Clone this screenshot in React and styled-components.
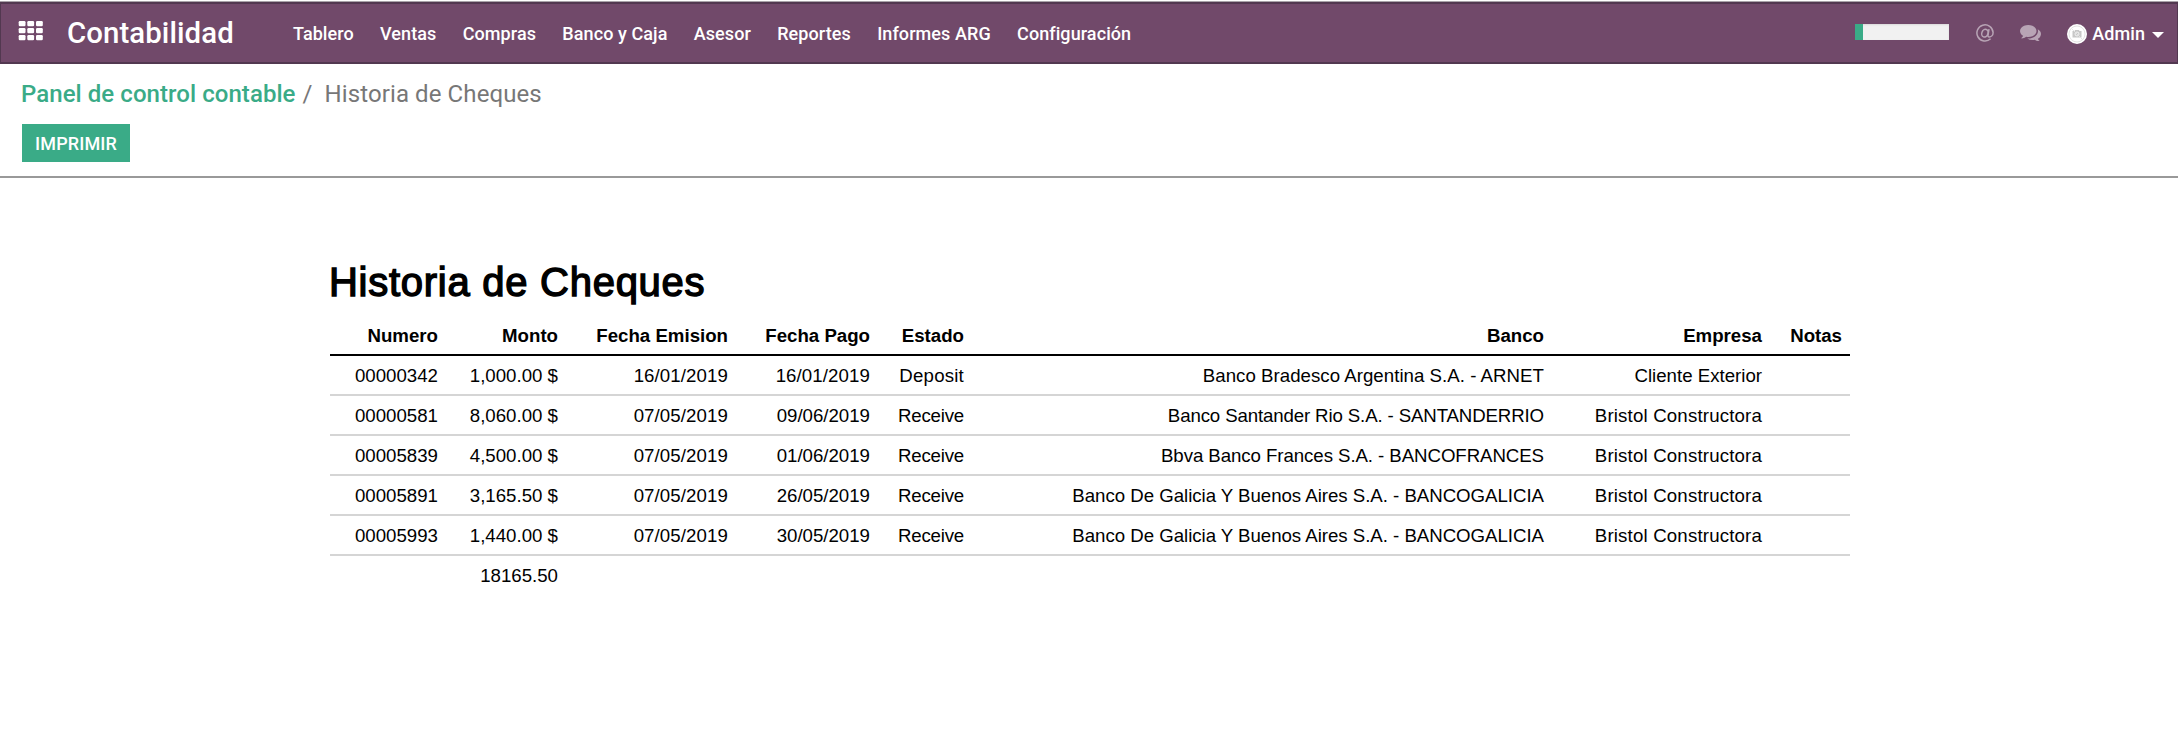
import React from "react";
import styled, { createGlobalStyle } from "styled-components";

const Global = createGlobalStyle`
  * { box-sizing: border-box; }
  body { margin: 0; background: #fff; font-family: Roboto, sans-serif; }
`;

const Page = styled.div`
  height: 730px;
  padding-top: 1px;
  overflow: hidden;
`;

const TopEdge = styled.div`
  height: 1px;
  background: #a9a3a9;
`;

const Navbar = styled.nav`
  display: flex;
  align-items: center;
  height: 62px;
  padding: 0 13px 0 17px;
  background: #71496a;
  border: solid #523850;
  border-width: 2px 1px;
  color: #fff;
  font-size: 18px;
  font-weight: 500;
  letter-spacing: 0.08px;
`;

const AppsGrid = styled.svg`
  width: 25px;
  height: 20px;
  margin-top: -4px;
  flex: none;
`;

const Brand = styled.div`
  flex: none;
  width: 250px;
  padding-left: 24px;
  font-size: 29.4px;
  line-height: 34px;
  white-space: nowrap;
`;

const Menu = styled.div`
  display: flex;
  gap: 26.3px;
  flex: 1;
  padding-top: 1px;
  white-space: nowrap;
`;

const MenuItem = styled.a`
  color: inherit;
`;

const Progress = styled.div`
  width: 94px;
  height: 16px;
  background: #f1f1f1;
  margin: -2px 27px 0 0;
  box-shadow: inset 0 1px 2px rgba(0, 0, 0, 0.1);
`;

const ProgressFill = styled.div`
  width: 8px;
  height: 16px;
  background: #3aab87;
`;

const TrayIcon = styled.svg`
  flex: none;
  width: ${(p) => p.$w}px;
  height: ${(p) => p.$h}px;
  color: #b8a4b5;
  margin-right: 26px;
`;

const Avatar = styled.svg`
  width: 20px;
  height: 20px;
  margin: 2px 5px 0 0;
`;

const UserName = styled.span`
  padding-top: 1px;
`;

const Caret = styled.span`
  margin-left: 7px;
  margin-top: 4px;
  border: 6px solid transparent;
  border-top-color: #fff;
  border-bottom: 0;
`;

const ControlPanel = styled.header`
  height: 114px;
  border-bottom: 2px solid #999;
  padding: 14px 22px 0;
`;

const Breadcrumb = styled.div`
  display: flex;
  height: 32px;
  align-items: center;
  margin-left: -1px;
  font-size: 24px;
  letter-spacing: 0.1px;
  color: #777;
  white-space: pre;
`;

const CrumbLink = styled.a`
  color: #3aab87;
  font-weight: 500;
  letter-spacing: 0.06px;
`;

const CrumbSeparator = styled.span`
  margin: 0 12px 0 7px;
`;

const PrintButton = styled.button`
  display: block;
  width: 108px;
  height: 38px;
  margin-top: 14px;
  padding: 0;
  border: 0;
  background: #3aab87;
  color: #fff;
  font: 500 18px Roboto, sans-serif;
  letter-spacing: 0.12px;
`;

const Report = styled.main`
  width: 1520px;
  margin: 82px 0 0 330px;
  font-family: "Liberation Sans", Arial, sans-serif;
  color: #000;
`;

const Title = styled.h2`
  margin: 0 0 11px -1px;
  font-size: 40px;
  line-height: 44px;
  font-weight: 400;
  letter-spacing: 0.73px;
  -webkit-text-stroke: 1.4px #000;
`;

const Table = styled.table`
  width: 1520px;
  table-layout: fixed;
  border-collapse: separate;
  border-spacing: 0;
  font-size: 18.66px;
  text-align: right;
  white-space: nowrap;
`;

const Col = styled.col`
  width: ${(p) => p.$w}px;
`;

const HeadCell = styled.th`
  height: 41px;
  padding: 2px 8px 0 0;
  text-align: right;
  border-bottom: 2px solid #000;
`;

const Cell = styled.td`
  height: 40px;
  padding: 2px 8px 0 0;
  letter-spacing: ${(p) => p.$tracking || 0}px;
  border-bottom: 2px solid ${(p) => (p.$last ? "transparent" : "#d5d5d5")};
`;

const menu = ["Tablero", "Ventas", "Compras", "Banco y Caja", "Asesor", "Reportes", "Informes ARG", "Configuración"];
const columns = [
  ["Numero", 116],
  ["Monto", 120],
  ["Fecha Emision", 170],
  ["Fecha Pago", 142],
  ["Estado", 94],
  ["Banco", 580],
  ["Empresa", 218],
  ["Notas", 80],
];
const rows = [
  ["00000342", "1,000.00 $", "16/01/2019", "16/01/2019", "Deposit", "Banco Bradesco Argentina S.A. - ARNET", "Cliente Exterior", ""],
  ["00000581", "8,060.00 $", "07/05/2019", "09/06/2019", "Receive", "Banco Santander Rio S.A. - SANTANDERRIO", "Bristol Constructora", ""],
  ["00005839", "4,500.00 $", "07/05/2019", "01/06/2019", "Receive", "Bbva Banco Frances S.A. - BANCOFRANCES", "Bristol Constructora", ""],
  ["00005891", "3,165.50 $", "07/05/2019", "26/05/2019", "Receive", "Banco De Galicia Y Buenos Aires S.A. - BANCOGALICIA", "Bristol Constructora", ""],
  ["00005993", "1,440.00 $", "07/05/2019", "30/05/2019", "Receive", "Banco De Galicia Y Buenos Aires S.A. - BANCOGALICIA", "Bristol Constructora", ""],
];
const totals = ["", "18165.50", "", "", "", "", "", ""];

const tracking = {
  Deposit: 0.2,
  Receive: -0.2,
  "Banco Bradesco Argentina S.A. - ARNET": 0.03,
  "Banco Santander Rio S.A. - SANTANDERRIO": -0.13,
  "Bbva Banco Frances S.A. - BANCOFRANCES": -0.07,
  "Banco De Galicia Y Buenos Aires S.A. - BANCOGALICIA": -0.03,
  "Bristol Constructora": 0.17,
  "16/01/2019": 0.1,
  "07/05/2019": 0.1,
};

export default function App() {
  return (
    <Page>
      <Global />
      <TopEdge />
      <Navbar>
        <AppsGrid viewBox="0 0 25 20" fill="#fff">
          {[0, 7, 14].map((y) =>
            [0.7, 9.3, 18].map((x) => <rect key={x + "-" + y} x={x} y={y} width="6.8" height="5.2" rx="1.2" />)
          )}
        </AppsGrid>
        <Brand>Contabilidad</Brand>
        <Menu>
          {menu.map((m) => (
            <MenuItem key={m}>{m}</MenuItem>
          ))}
        </Menu>
        <Progress>
          <ProgressFill />
        </Progress>
        <TrayIcon $w={18} $h={18} viewBox="0 0 18 18" fill="none" stroke="currentColor" strokeWidth="1.5">
          <path d="M14.6 14.8A8.1 8.1 0 1 1 17.1 8.5C17.1 11.4 15 13 13.3 13 12 13 11.8 12 12 11L13 5.2" />
          <ellipse cx="8.9" cy="9.2" rx="3.1" ry="3.9" transform="rotate(20 8.9 9.2)" />
        </TrayIcon>
        <TrayIcon $w={21} $h={16.5} viewBox="0 256 1792 1408" fill="currentColor">
          <path d="M1408 768q0 139-94 257t-256.5 186.5-353.5 68.5q-86 0-176-16-124 88-278 128-36 9-86 16h-3q-11 0-20.5-8t-11.5-21q-1-3-1-6.5t.5-6.5 2-6l2.5-5 3.5-5.5 4-5 4.5-5 4-4.5q5-6 23-25t26-29.5 22.5-29 25-38.5 20.5-44q-124-72-195-177t-71-224q0-139 94-257t256.5-186.5 353.5-68.5 353.5 68.5 256.5 186.5 94 257zm384 256q0 120-71 224.5t-195 176.5q10 24 20.5 44t25 38.5 22.5 29 26 29.5 23 25q1 1 4 4.5t4.5 5 4 5 3.5 5.5l2.5 5 2 6 .5 6.5-1 6.5q-3 14-13 22t-22 7q-50-7-86-16-154-40-278-128-90 16-176 16-271 0-472-132 58 4 88 4 161 0 309-45t264-129q125-92 192-212t67-254q0-77-23-152 129 71 204 178t75 230z" />
        </TrayIcon>
        <Avatar viewBox="0 0 20 20">
          <circle cx="10" cy="10" r="10" fill="#fff" />
          <circle cx="10" cy="10" r="8" fill="none" stroke="#e3e3e3" strokeWidth="1" />
          <path d="M5.5 7h2l.7-1h3.6l.7 1h2v6.5h-9z" fill="#c8c8c8" />
          <circle cx="10" cy="10" r="2" fill="none" stroke="#f4f4f4" />
          <path d="M4.4 4.4l11.2 11.2" stroke="#e3e3e3" strokeWidth="0.9" />
        </Avatar>
        <UserName>Admin</UserName>
        <Caret />
      </Navbar>
      <ControlPanel>
        <Breadcrumb>
          <CrumbLink>Panel de control contable</CrumbLink>
          <CrumbSeparator>/</CrumbSeparator>
          <span>Historia de Cheques</span>
        </Breadcrumb>
        <PrintButton>IMPRIMIR</PrintButton>
      </ControlPanel>
      <Report>
        <Title>Historia de Cheques</Title>
        <Table>
          <colgroup>
            {columns.map(([name, w]) => (
              <Col key={name} $w={w} />
            ))}
          </colgroup>
          <thead>
            <tr>
              {columns.map(([name]) => (
                <HeadCell key={name}>{name}</HeadCell>
              ))}
            </tr>
          </thead>
          <tbody>
            {rows.map((row) => (
              <tr key={row[0]}>
                {row.map((value, i) => (
                  <Cell key={i} $tracking={tracking[value]}>
                    {value}
                  </Cell>
                ))}
              </tr>
            ))}
            <tr>
              {totals.map((value, i) => (
                <Cell key={i} $last>
                  {value}
                </Cell>
              ))}
            </tr>
          </tbody>
        </Table>
      </Report>
    </Page>
  );
}
